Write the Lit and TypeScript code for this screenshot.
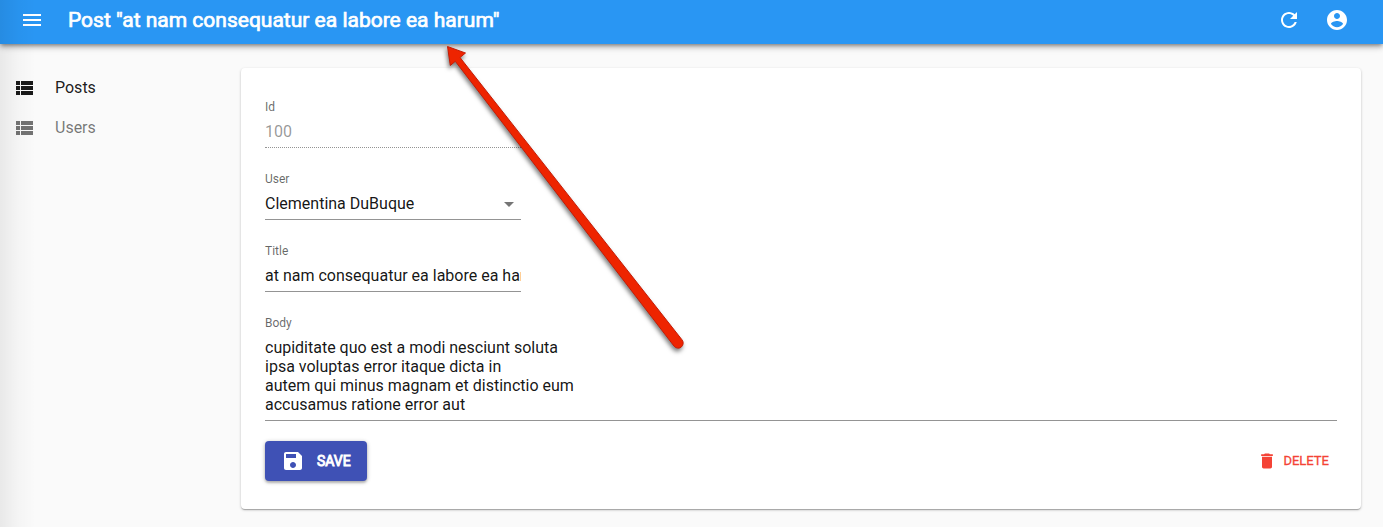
import { LitElement, html, css, svg } from 'lit';
import { customElement } from 'lit/decorators.js';

const paths = {
  menu: 'M3 18h18v-2H3v2zm0-5h18v-2H3v2zm0-7v2h18V6H3z',
  refresh: 'M17.65 6.35C16.2 4.9 14.21 4 12 4c-4.42 0-7.99 3.58-7.99 8s3.57 8 7.99 8c3.73 0 6.84-2.55 7.73-6h-2.08c-.82 2.33-3.04 4-5.65 4-3.31 0-6-2.69-6-6s2.69-6 6-6c1.66 0 3.14.69 4.22 1.78L13 11h7V4l-2.35 2.35z',
  account: 'M12 2C6.48 2 2 6.48 2 12s4.48 10 10 10 10-4.48 10-10S17.52 2 12 2zm0 3c1.66 0 3 1.34 3 3s-1.34 3-3 3-3-1.34-3-3 1.34-3 3-3zm0 14.2c-2.5 0-4.71-1.28-6-3.22.03-1.99 4-3.08 6-3.08 1.99 0 5.97 1.09 6 3.08-1.29 1.94-3.5 3.22-6 3.22z',
  list: 'M4 14h4v-4H4v4zm0 5h4v-4H4v4zM4 9h4V5H4v4zm5 5h12v-4H9v4zm0 5h12v-4H9v4zM9 5v4h12V5H9z',
  save: 'M17 3H5c-1.11 0-2 .9-2 2v14c0 1.1.89 2 2 2h14c1.1 0 2-.9 2-2V7l-4-4zm-5 16c-1.66 0-3-1.34-3-3s1.34-3 3-3 3 1.34 3 3-1.34 3-3 3zm3-10H5V5h10v4z',
  trash: 'M6 19c0 1.1.9 2 2 2h8c1.1 0 2-.9 2-2V7H6v12zM19 4h-3.5l-1-1h-5l-1 1H5v2h14V4z',
  drop: 'M7 10l5 5 5-5z',
};

const icon = (name: keyof typeof paths, size = 24) =>
  html`<svg class="icon" width=${size} height=${size} viewBox="0 0 24 24">${svg`<path d=${paths[name]}></path>`}</svg>`;

@customElement('app-root')
export class AppRoot extends LitElement {
  static styles = css`
    :host {
      display: flex;
      flex-direction: column;
      position: relative;
      height: 527px;
      overflow: hidden;
      background: #fafafa;
      color: rgba(0, 0, 0, 0.87);
      font: 400 16px/19px Roboto, sans-serif;
    }
    .icon { display: block; flex: none; fill: currentColor; }
    .bar {
      display: flex;
      align-items: center;
      flex: none;
      box-sizing: border-box;
      height: 44px;
      padding: 0 34px 4px 20px;
      background: #2996f3;
      color: #fff;
      box-shadow: 0 2px 4px -1px rgba(0, 0, 0, 0.4), 0 4px 5px rgba(0, 0, 0, 0.14), 0 1px 10px rgba(0, 0, 0, 0.12);
      z-index: 1;
    }
    .heading { flex: 1; margin: 0 0 0 24px; font-size: 21px; font-weight: 400; line-height: 24px; -webkit-text-stroke: 0.7px #fff; }
    .actions { display: flex; gap: 24px; }
    .body { display: flex; flex: 1; align-items: flex-start; }
    .menu { width: 241px; flex: none; padding-top: 24px; }
    .item {
      display: flex;
      align-items: center;
      gap: 19px;
      height: 40px;
      padding-left: 12px;
      color: rgba(0, 0, 0, 0.54);
    }
    .item span { padding-bottom: 2px; }
    .item.active { color: rgba(0, 0, 0, 0.9); }
    .card {
      box-sizing: border-box;
      width: 1120px;
      height: 441px;
      margin-top: 24px;
      padding: 32px 24px 0;
      border-radius: 4px;
      background: #fff;
      box-shadow: 0 1px 3px rgba(0, 0, 0, 0.2), 0 1px 1px rgba(0, 0, 0, 0.14), 0 2px 1px -1px rgba(0, 0, 0, 0.12);
    }
    .field { width: 256px; height: 48px; margin-bottom: 24px; }
    .field.wide { width: 100%; height: 105px; margin-bottom: 20px; }
    .label { box-sizing: border-box; height: 13px; padding-top: 1px; font-size: 12px; line-height: 13px; color: rgba(0, 0, 0, 0.6); }
    .value {
      display: flex;
      box-sizing: border-box;
      height: 35px;
      padding-top: 9px;
      border-bottom: 1px solid #949494;
      overflow: hidden;
      white-space: pre;
      color: rgba(0, 0, 0, 0.92);
    }
    .wide .value { height: 92px; }
    .field.disabled .value { color: rgba(0, 0, 0, 0.42); border-bottom-style: dotted; }
    .select { justify-content: space-between; }
    .select .icon { margin-top: -2px; color: rgba(0, 0, 0, 0.54); }
    .toolbar { display: flex; justify-content: space-between; align-items: center; }
    .button { display: flex; align-items: center; text-transform: uppercase; border: 0; font-family: inherit; }
    .save {
      box-sizing: border-box;
      width: 102px;
      height: 40px;
      padding: 0 0 0 16px;
      gap: 12px;
      border-radius: 4px;
      background: #3f51b5;
      color: #fff;
      font-size: 14px;
      font-weight: 400;
      -webkit-text-stroke: 0.9px #fff;
      box-shadow: 0 1px 4px rgba(0, 0, 0, 0.3), 0 2px 2px rgba(0, 0, 0, 0.14);
    }
    .delete { gap: 6px; padding: 0 8px 0 0; background: none; color: #f44336; font-size: 13px; font-weight: 400; -webkit-text-stroke: 0.3px #f44336; }
    .delete span { padding-bottom: 2px; }
    .edge {
      position: absolute;
      inset: 0 auto 0 0;
      width: 36px;
      background: linear-gradient(to right, rgba(0, 0, 0, 0.07), rgba(0, 0, 0, 0.025) 50%, transparent);
      z-index: 2;
    }
    .arrow { position: absolute; top: 0; left: 0; z-index: 3; filter: drop-shadow(-1px 3px 2px rgba(0, 0, 0, 0.5)); }
  `;

  render() {
    return html`
      <header class="bar">
        ${icon('menu')}
        <h1 class="heading">Post "at nam consequatur ea labore ea harum"</h1>
        <div class="actions">${icon('refresh')}${icon('account')}</div>
      </header>
      <div class="body">
        <nav class="menu">
          <div class="item active">${icon('list')}<span>Posts</span></div>
          <div class="item">${icon('list')}<span>Users</span></div>
        </nav>
        <main class="card">
          <div class="field disabled"><div class="label">Id</div><div class="value">100</div></div>
          <div class="field"><div class="label">User</div><div class="value select"><span>Clementina DuBuque</span>${icon('drop')}</div></div>
          <div class="field"><div class="label">Title</div><div class="value">at nam consequatur ea labore ea harum</div></div>
          <div class="field wide"><div class="label">Body</div><div class="value">cupiditate quo est a modi nesciunt soluta
ipsa voluptas error itaque dicta in
autem qui minus magnam et distinctio eum
accusamus ratione error aut</div></div>
          <div class="toolbar">
            <button class="button save">${icon('save')}<span>Save</span></button>
            <button class="button delete">${icon('trash', 20)}<span>Delete</span></button>
          </div>
        </main>
      </div>
      <div class="edge"></div>
      <svg class="arrow" width="720" height="370" viewBox="0 0 720 370">
        <path d="M447.5 46.5L465.5 53L460 57.5L682 339.8A5 5 0 0 1 674.2 346.3L455.3 61.3L450.3 65.5Z"
          fill="#ee2400" stroke="#c41c05" stroke-width="1" stroke-linejoin="round"></path>
      </svg>
    `;
  }
}
